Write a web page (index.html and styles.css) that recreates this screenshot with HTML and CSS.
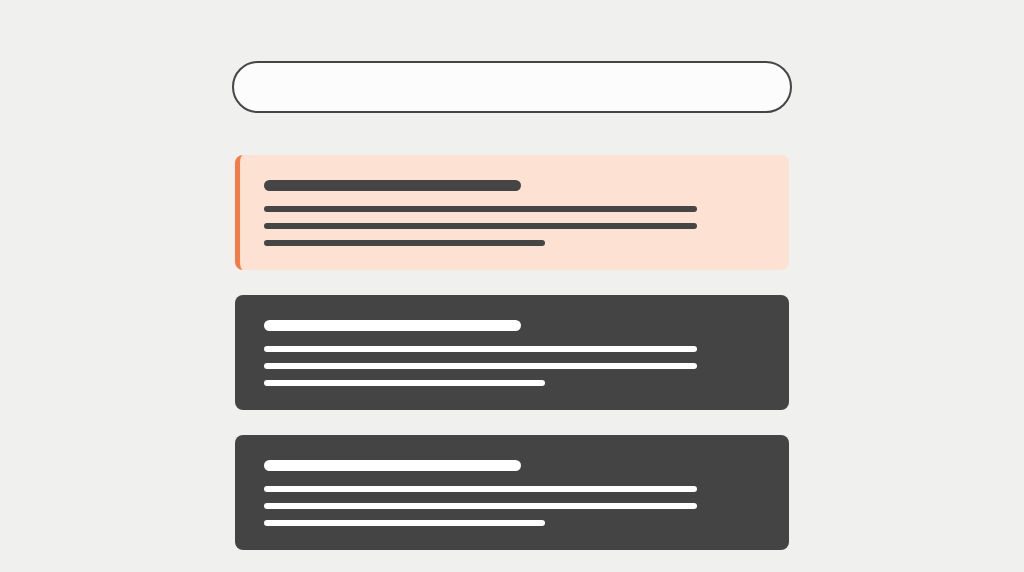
FILE: index.html
```html
<!DOCTYPE html>
<html lang="en">
<head>
<meta charset="utf-8">
<title>Feed</title>
<link rel="stylesheet" href="styles.css">
</head>
<body>
<main class="wrap">
  <div class="search" role="search" aria-label="Search"></div>
  <section class="list">
    <article class="card card-active">
      <div class="title"></div>
      <div class="line"></div>
      <div class="line"></div>
      <div class="line short"></div>
    </article>
    <article class="card card-dark">
      <div class="title"></div>
      <div class="line"></div>
      <div class="line"></div>
      <div class="line short"></div>
    </article>
    <article class="card card-dark">
      <div class="title"></div>
      <div class="line"></div>
      <div class="line"></div>
      <div class="line short"></div>
    </article>
  </section>
</main>
</body>
</html>
```
FILE: styles.css
```css
html, body {
  margin: 0;
  padding: 0;
  background: #f0f0ef;
  font-family: "Liberation Sans", Arial, sans-serif;
}
.wrap {
  width: 560px;
  margin: 0 auto;
  padding-top: 61px;
  display: flex;
  flex-direction: column;
}
.search {
  box-sizing: border-box;
  height: 52px;
  border: 2px solid #454545;
  border-radius: 26px;
  background: #fcfcfc;
}
.list {
  margin: 42px 3px 0;
  display: flex;
  flex-direction: column;
  gap: 25px;
}
.card {
  box-sizing: border-box;
  height: 115px;
  padding: 25px 29px 0;
  border-radius: 8px;
  display: flex;
  flex-direction: column;
}
.card-active {
  background: #fde1d3;
  border-left: 5px solid #f37b45;
  padding-left: 24px;
}
.card-dark {
  background: #444444;
}
.title {
  width: 257px;
  height: 11px;
  border-radius: 6px;
  margin-bottom: 15px;
}
.line {
  width: 433px;
  height: 6px;
  border-radius: 3px;
  margin-bottom: 11px;
}
.line.short {
  width: 281px;
  margin-bottom: 0;
}
.card-active .title,
.card-active .line {
  background: #454545;
}
.card-dark .title,
.card-dark .line {
  background: #ffffff;
}
```
